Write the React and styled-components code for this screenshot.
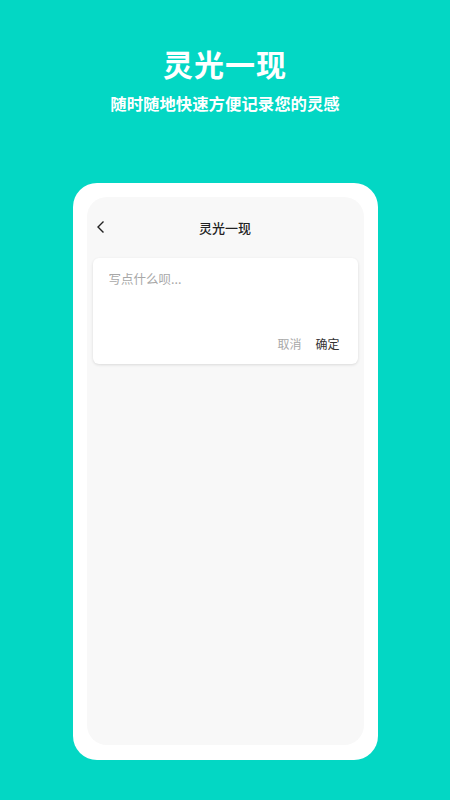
import React, { useState } from "react";
import styled, { createGlobalStyle } from "styled-components";

const GlobalStyle = createGlobalStyle`
  html, body {
    margin: 0;
    padding: 0;
    background: #03d7c4;
  }
  body {
    font-family: "Noto Sans CJK SC", "Noto Sans", sans-serif;
  }
`;

const Page = styled.div`
  width: 450px;
  height: 800px;
  background: #03d7c4;
  display: flex;
  flex-direction: column;
  align-items: center;
  box-sizing: border-box;
  padding-top: 43px;
`;

const Headline = styled.h1`
  margin: 0;
  font-size: 30px;
  line-height: 40px;
  font-weight: 700;
  color: #ffffff;
  letter-spacing: 1px;
`;

const Tagline = styled.p`
  margin: 8px 0 0;
  font-size: 16.4px;
  line-height: 24px;
  font-weight: 700;
  color: #ffffff;
`;

const Phone = styled.div`
  margin-top: 68px;
  width: 305px;
  height: 577px;
  box-sizing: border-box;
  padding: 14px 14px 15px;
  background: #ffffff;
  border-radius: 24px;
  display: flex;
`;

const Screen = styled.div`
  flex: 1;
  background: #f8f8f8;
  border-radius: 20px;
  display: flex;
  flex-direction: column;
  padding: 0 6px;
`;

const NavBar = styled.div`
  height: 60px;
  display: flex;
  align-items: center;
  justify-content: center;
  position: relative;
`;

const BackButton = styled.button`
  position: absolute;
  left: 3px;
  top: 50%;
  transform: translateY(-50%);
  border: none;
  background: none;
  padding: 0;
  display: flex;
  cursor: pointer;
`;

const NavTitle = styled.span`
  font-size: 13px;
  font-weight: 500;
  color: #222;
`;

const Editor = styled.div`
  margin-top: 1px;
  height: 106px;
  box-sizing: border-box;
  background: #ffffff;
  border-radius: 6px;
  box-shadow: 0 1px 3px rgba(0, 0, 0, 0.12);
  display: flex;
  flex-direction: column;
  padding: 12px 18px 10px 16px;
`;

const Input = styled.textarea`
  flex: 1;
  border: none;
  outline: none;
  resize: none;
  padding: 0;
  font-family: inherit;
  font-size: 12.5px;
  line-height: 18px;
  color: #333;
  &::placeholder {
    color: #a8a8a8;
  }
`;

const Actions = styled.div`
  display: flex;
  justify-content: flex-end;
  gap: 14px;
`;

const Action = styled.button`
  border: none;
  background: none;
  padding: 0;
  font-family: inherit;
  font-size: 12px;
  line-height: 20px;
  color: ${({ $primary }) => ($primary ? "#333" : "#a8a8a8")};
  cursor: pointer;
`;

function ChevronLeft() {
  return (
    <svg width="10" height="14" viewBox="0 0 10 14">
      <path d="M7.5 1.5 L2 7 L7.5 12.5" fill="none" stroke="#222" strokeWidth="1.4" />
    </svg>
  );
}

export default function App() {
  const [text, setText] = useState("");

  return (
    <>
      <GlobalStyle />
      <Page>
        <Headline>灵光一现</Headline>
        <Tagline>随时随地快速方便记录您的灵感</Tagline>
        <Phone>
          <Screen>
            <NavBar>
              <BackButton aria-label="返回">
                <ChevronLeft />
              </BackButton>
              <NavTitle>灵光一现</NavTitle>
            </NavBar>
            <Editor>
              <Input
                placeholder="写点什么呗..."
                value={text}
                onChange={(e) => setText(e.target.value)}
              />
              <Actions>
                <Action onClick={() => setText("")}>取消</Action>
                <Action $primary>确定</Action>
              </Actions>
            </Editor>
          </Screen>
        </Phone>
      </Page>
    </>
  );
}
